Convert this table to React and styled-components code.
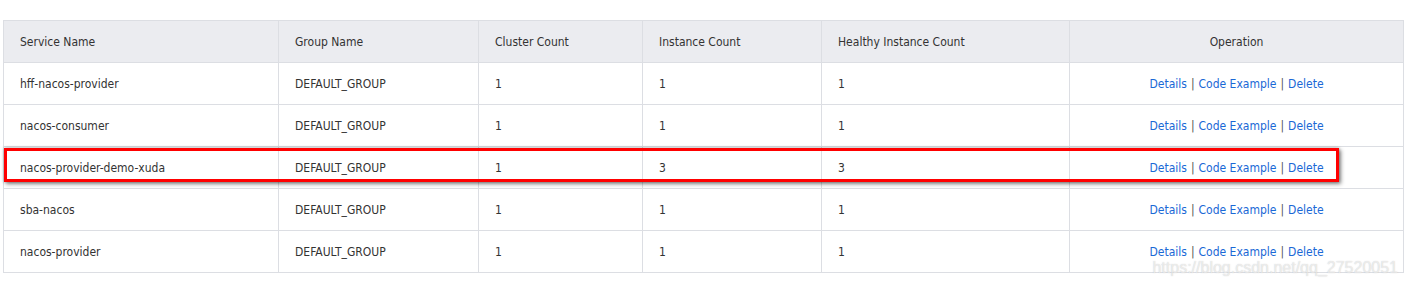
import React from 'react';
import styled, { createGlobalStyle } from 'styled-components';

const GlobalStyle = createGlobalStyle`
    body {
        margin: 0;
        background: #fff;
        font-family: "DejaVu Sans Condensed", "DejaVu Sans", sans-serif;
    }
`;

const columns = [
    { title: 'Service Name', width: 275 },
    { title: 'Group Name', width: 200 },
    { title: 'Cluster Count', width: 164 },
    { title: 'Instance Count', width: 179 },
    { title: 'Healthy Instance Count', width: 248 },
    { title: 'Operation', width: 334, center: true },
];

const services = [
    { name: 'hff-nacos-provider', group: 'DEFAULT_GROUP', clusters: 1, instances: 1, healthy: 1 },
    { name: 'nacos-consumer', group: 'DEFAULT_GROUP', clusters: 1, instances: 1, healthy: 1 },
    { name: 'nacos-provider-demo-xuda', group: 'DEFAULT_GROUP', clusters: 1, instances: 3, healthy: 3, marked: true },
    { name: 'sba-nacos', group: 'DEFAULT_GROUP', clusters: 1, instances: 1, healthy: 1 },
    { name: 'nacos-provider', group: 'DEFAULT_GROUP', clusters: 1, instances: 1, healthy: 1 },
];

export default function App() {
    return (
        <Page>
            <GlobalStyle />
            <TableWrap>
                <Table>
                    <colgroup>
                        {columns.map(c => <col key={c.title} style={{ width: c.width }} />)}
                    </colgroup>
                    <thead>
                        <tr>
                            {columns.map(c => (
                                <Th key={c.title} center={c.center}>{c.title}</Th>
                            ))}
                        </tr>
                    </thead>
                    <tbody>
                        {services.map(s => (
                            <tr key={s.name}>
                                <Td>{s.name}</Td>
                                <Td>{s.group}</Td>
                                <Td>{s.clusters}</Td>
                                <Td>{s.instances}</Td>
                                <Td>{s.healthy}</Td>
                                <Td center>
                                    <Link>Details</Link>
                                    <Sep>|</Sep>
                                    <Link>Code Example</Link>
                                    <Sep>|</Sep>
                                    <Link>Delete</Link>
                                </Td>
                            </tr>
                        ))}
                    </tbody>
                </Table>
                <Highlight />
            </TableWrap>
            <Watermark>https://blog.csdn.net/qq_27520051</Watermark>
        </Page>
    );
}

const Page = styled.div`
    position: relative;
    width: 1408px;
    height: 287px;
    padding: 20px 0 0 3px;
    box-sizing: border-box;
`;

const TableWrap = styled.div`
    position: relative;
    width: 1400px;
`;

const Table = styled.table`
    width: 1400px;
    table-layout: fixed;
    border-collapse: collapse;
    font-size: 12px;
    color: #333;
    border: 1px solid #dcdee3;
`;

const Th = styled.th`
    height: 41px;
    padding: 0 16px;
    background: #ebecf0;
    border: 1px solid #dcdee3;
    font-weight: normal;
    text-align: ${p => (p.center ? 'center' : 'left')};
    color: #333;
`;

const Td = styled.td`
    height: 41px;
    padding: 0 16px;
    border: 1px solid #dcdee3;
    text-align: ${p => (p.center ? 'center' : 'left')};
    white-space: nowrap;
`;

const Link = styled.a`
    color: #1a68d6;
    cursor: pointer;
`;

const Sep = styled.span`
    margin: 0 4px;
    color: #555;
`;

const Highlight = styled.div`
    position: absolute;
    left: 1px;
    top: 128px;
    width: 1335px;
    height: 34px;
    box-sizing: border-box;
    border: 3px solid #ff0000;
    box-shadow: 2px 2px 4px rgba(0, 0, 0, 0.45), 0 0 3px rgba(0, 0, 0, 0.3);
`;

const Watermark = styled.div`
    position: absolute;
    right: 10px;
    top: 259px;
    font-family: "Liberation Sans", Arial, sans-serif;
    font-size: 16px;
    color: rgba(255, 255, 255, 0.6);
    text-shadow: 0 0 1px rgba(150, 150, 150, 0.55);
`;
